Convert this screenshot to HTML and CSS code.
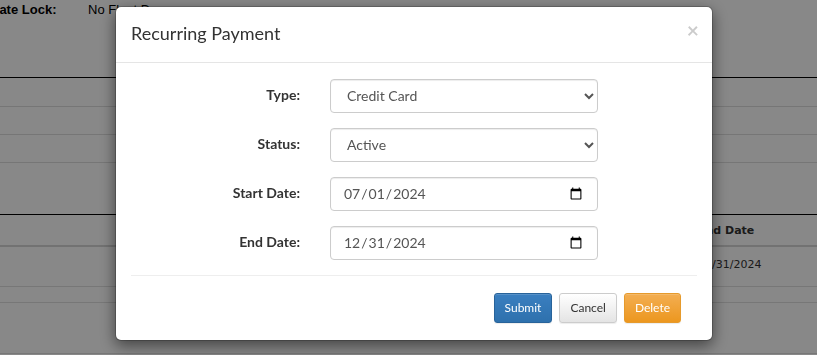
FILE: index.html
```html
<html>
  <head>
    <meta name="viewport" content="width=device-width, initial-scale=1" />
    <title>Recurring Payment</title>
    <link rel="stylesheet" href="styles.css">
  </head>
  <body>

    <div class="page">
      <div class="info-line">
        <span class="info-label">Rate Lock:</span>
        <span class="info-value">No Float Down</span>
      </div>

      <div class="sheet">
        <div class="sheet-row first"></div>
        <div class="sheet-row"></div>
        <div class="sheet-row"></div>
        <div class="sheet-row last"></div>
      </div>

      <div class="grid">
        <div class="grid-head"><span class="cell">End Date</span></div>
        <div class="grid-row"><span class="cell">12/31/2024</span></div>
        <div class="grid-row thin"></div>
        <div class="grid-row tall"></div>
      </div>
    </div>

    <div class="backdrop"></div>

    <div class="modal">
      <div class="modal-content">
        <div class="modal-header">
          <button type="button" class="close">&times;</button>
          <h4 class="modal-title">Recurring Payment</h4>
        </div>
        <div class="modal-body">
          <form class="form">
            <div class="form-group">
              <label class="form-label" for="pay-type">Type:</label>
              <select id="pay-type" class="form-control">
                <option>Credit Card</option>
                <option>ACH</option>
              </select>
            </div>
            <div class="form-group">
              <label class="form-label" for="pay-status">Status:</label>
              <select id="pay-status" class="form-control">
                <option>Active</option>
                <option>Inactive</option>
              </select>
            </div>
            <div class="form-group">
              <label class="form-label" for="pay-start">Start Date:</label>
              <input id="pay-start" type="date" class="form-control" value="2024-07-01">
            </div>
            <div class="form-group">
              <label class="form-label" for="pay-end">End Date:</label>
              <input id="pay-end" type="date" class="form-control" value="2024-12-31">
            </div>
            <hr class="divider">
            <div class="actions">
              <button type="button" class="btn btn-primary">Submit</button>
              <button type="button" class="btn btn-default">Cancel</button>
              <button type="button" class="btn btn-warning">Delete</button>
            </div>
          </form>
        </div>
      </div>
    </div>

  </body>
</html>
```

FILE: styles.css
```css
html, body {
  margin: 0;
  padding: 0;
  background: #fff;
  overflow: hidden;
}

/* page behind the dialog */
.page {
  font-family: "Liberation Sans", Arial, sans-serif;
  color: #000;
}

.info-line {
  display: flex;
  height: 20px;
  padding-top: 1px;
  font-size: 13px;
  line-height: 18px;
}
.info-label {
  font-weight: bold;
  margin-left: -10px;
  width: 98px;
}

.sheet {
  margin-top: 56px;
  border-top: 1px solid #000;
}
.sheet-row {
  height: 27px;
  border-bottom: 1px solid #dedede;
}
.sheet-row.first {
  height: 28px;
}
.sheet-row.last {
  height: 51px;
  border-bottom: 1px solid #000;
}

.grid {
  font-family: "DejaVu Sans", Verdana, sans-serif;
  font-size: 11px;
  color: #333;
}
.grid-head {
  display: flex;
  align-items: center;
  height: 30px;
  border-bottom: 2px solid #d6d6d6;
  font-weight: bold;
}
.grid-row {
  display: flex;
  align-items: flex-start;
  box-sizing: border-box;
  height: 40px;
  padding-top: 11px;
  border-bottom: 1px solid #e0e0e0;
}
.grid-row.thin {
  height: 16px;
  padding-top: 0;
}
.grid-row.tall {
  height: 51px;
  padding-top: 0;
}
.cell {
  margin-left: 698px;
}

.backdrop {
  position: fixed;
  left: 0;
  top: 0;
  right: 0;
  bottom: 0;
  background: rgba(0, 0, 0, 0.467);
  z-index: 10;
}

/* dialog */
.modal {
  position: fixed;
  top: 6px;
  left: 115px;
  width: 598px;
  z-index: 20;
  font-family: Lato, "Helvetica Neue", Arial, sans-serif;
  font-size: 14px;
  line-height: 1.42857;
  color: #333;
}
.modal-content {
  background: #fff;
  border: 1px solid rgba(0, 0, 0, 0.2);
  border-radius: 6px;
  box-shadow: 0 5px 15px rgba(0, 0, 0, 0.5);
  background-clip: padding-box;
}
.modal-header {
  padding: 14px 15px 15px;
  border-bottom: 1px solid #e5e5e5;
}
.modal-title {
  margin: 0;
  font-size: 18px;
  font-weight: normal;
  line-height: 1.42857;
}
.close {
  float: right;
  margin-top: -2px;
  margin-right: -2px;
  padding: 0;
  border: 0;
  background: transparent;
  font-family: Lato, "Helvetica Neue", Arial, sans-serif;
  font-size: 21px;
  font-weight: bold;
  line-height: 1;
  color: #000;
  opacity: 0.2;
  cursor: pointer;
}

.modal-body {
  padding: 16px 15px 17px;
}

.form {
  margin: 0;
}

.form-group {
  display: grid;
  grid-template-columns: 169px 268px;
  column-gap: 30px;
  margin-bottom: 15px;
}
.form-label {
  padding-top: 6px;
  font-weight: bold;
  text-align: right;
}
.form-control {
  display: block;
  width: 100%;
  height: 34px;
  box-sizing: border-box;
  padding: 6px 12px;
  font-family: Lato, "Helvetica Neue", Arial, sans-serif;
  font-size: 14px;
  line-height: 1.42857;
  color: #555;
  background: #fff;
  border: 1px solid #ccc;
  border-radius: 4px;
  box-shadow: inset 0 1px 1px rgba(0, 0, 0, 0.075);
}

.divider {
  margin: 0 0 17px;
  border: 0;
  border-top: 1px solid #eee;
}

.actions {
  display: flex;
  justify-content: flex-end;
  gap: 7px;
  padding-right: 16px;
}
.btn {
  height: 30px;
  padding: 5px 10px;
  font-family: Lato, "Helvetica Neue", Arial, sans-serif;
  font-size: 12px;
  line-height: 1.5;
  border: 1px solid transparent;
  border-radius: 3px;
  box-shadow: inset 0 1px 0 rgba(255, 255, 255, 0.15), 0 1px 1px rgba(0, 0, 0, 0.075);
  cursor: pointer;
}
.btn-primary {
  color: #fff;
  background: linear-gradient(#3a7fc0, #2e71ad);
  border-color: #28639a;
}
.btn-default {
  color: #333;
  background: linear-gradient(#fff, #e4e4e4);
  border-color: #ccc;
}
.btn-warning {
  color: #fff;
  background: linear-gradient(#f3ae52, #ec971f);
  border-color: #e69a2c;
}
```
